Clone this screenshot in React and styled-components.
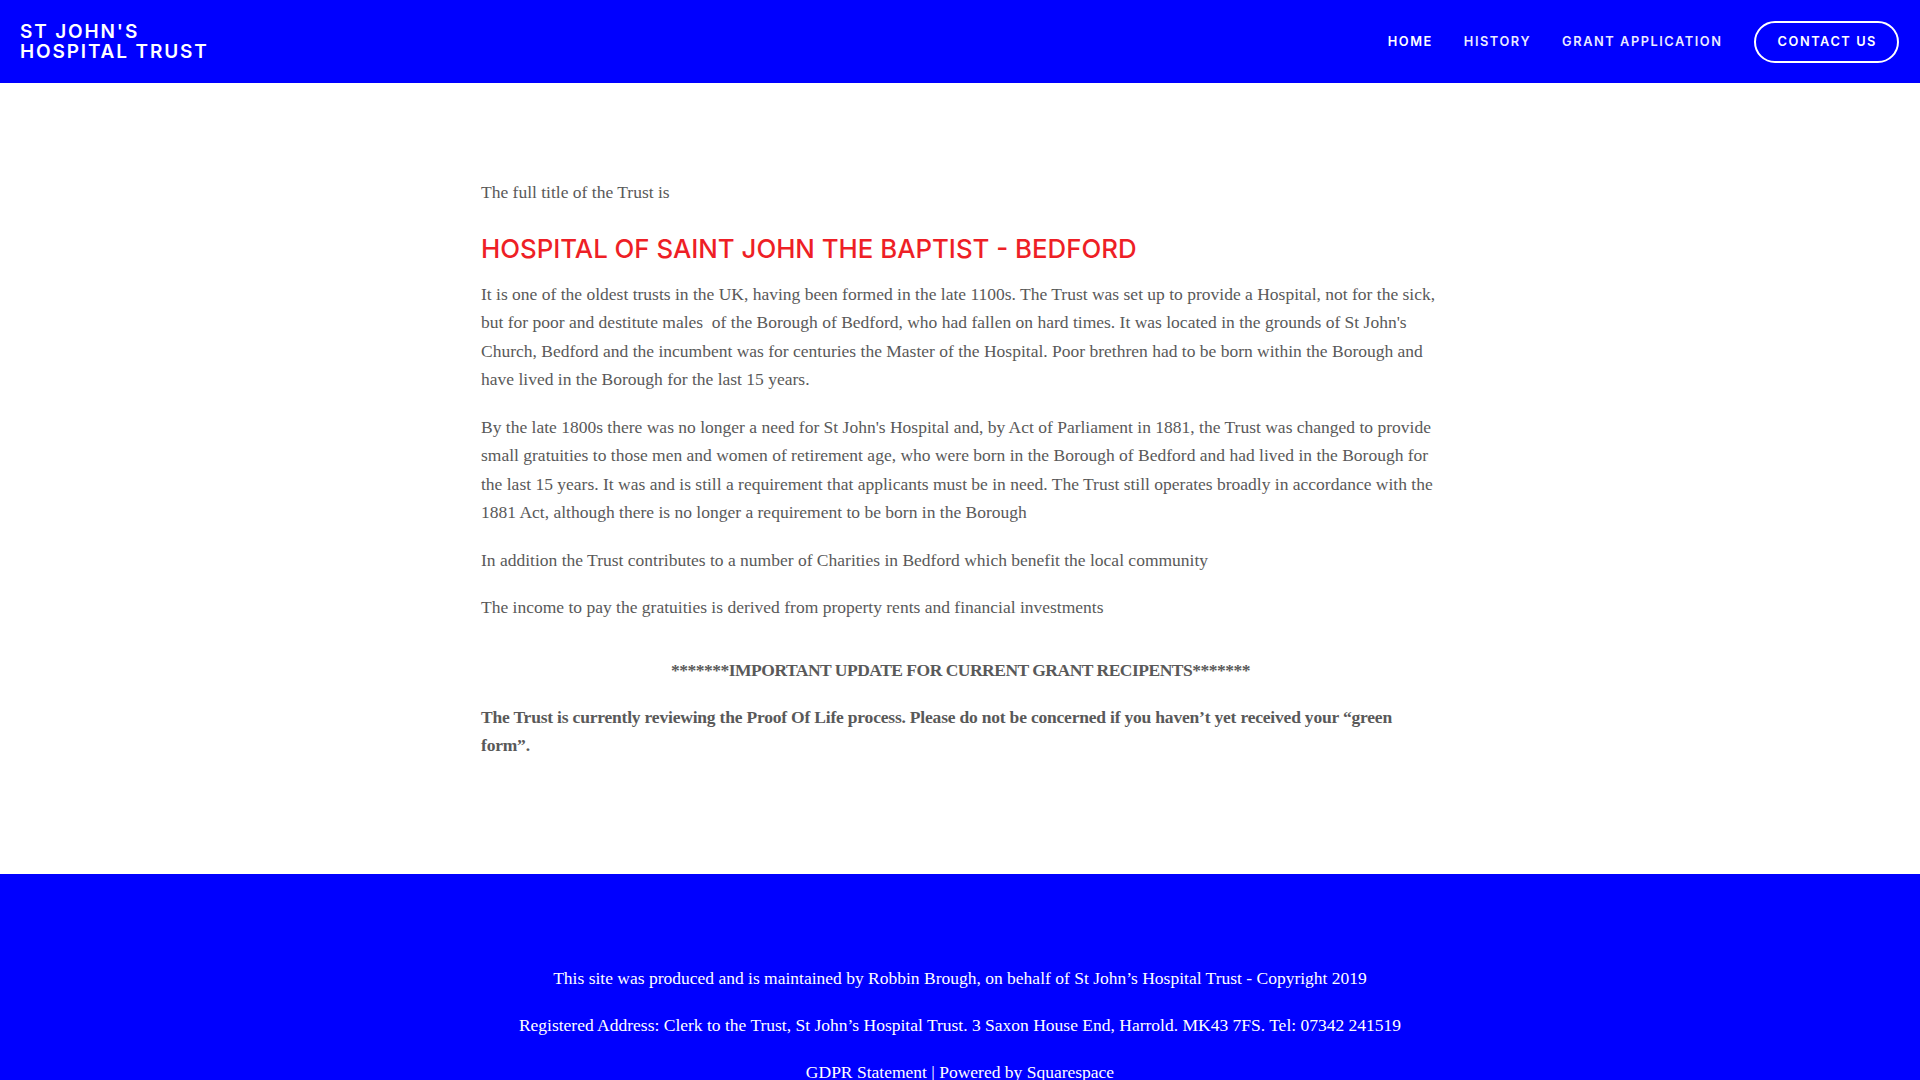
import React from 'react'
import styled, { createGlobalStyle } from 'styled-components'

const GlobalStyle = createGlobalStyle`
    html, body {
        margin: 0;
        padding: 0;
        background: #fff;
    }
    * {
        box-sizing: border-box;
    }
`

const Header = styled.header`
    height: 83px;
    padding: 0 21px 0 20px;
    display: flex;
    justify-content: space-between;
    align-items: center;
    background: #0000ff;
`

const Logo = styled.a`
    display: block;
    color: #fff;
    font-family: Inter, 'Noto Sans', sans-serif;
    font-weight: 600;
    font-size: 19px;
    line-height: 20px;
    letter-spacing: 1.85px;
    text-transform: uppercase;
    text-decoration: none;
`

const Nav = styled.nav`
    display: flex;
    align-items: center;
    gap: 31px;
`

const NavLink = styled.a`
    color: #fff;
    font-family: Inter, 'Noto Sans', sans-serif;
    font-weight: 600;
    font-size: 12.8px;
    letter-spacing: 1.55px;
    text-transform: uppercase;
    text-decoration: none;
    opacity: ${(p) => (p.active ? 1 : 0.92)};
`

const ContactButton = styled.a`
    display: flex;
    align-items: center;
    height: 42px;
    padding: 0 20px 0 22px;
    border: 2px solid #fff;
    border-radius: 21px;
    color: #fff;
    font-family: Inter, 'Noto Sans', sans-serif;
    font-weight: 600;
    font-size: 12.8px;
    letter-spacing: 1.55px;
    text-transform: uppercase;
    text-decoration: none;
`

const Main = styled.main`
    padding: 95px 0 114px;
`

const Content = styled.div`
    width: 960px;
    margin: 0 auto;
    padding-left: 1px;
    color: #595959;
    font-family: 'Liberation Serif', 'Times New Roman', serif;
    font-size: 17.5px;
    line-height: 28.6px;
`

const Para = styled.p`
    margin: 0 0 18.7px;
    font-weight: ${(p) => (p.bold ? 700 : 400)};
    letter-spacing: ${(p) => (p.bold ? '-0.2px' : 'normal')};
    text-align: ${(p) => (p.center ? 'center' : 'left')};
    &:last-child {
        margin-bottom: 0;
    }
`

const Important = styled(Para)`
    margin-top: 34px;
    letter-spacing: -0.5px;
`

const Title = styled.h1`
    margin: 25px 0 14px;
    color: #ee1f26;
    font-family: Inter, 'Noto Sans', sans-serif;
    font-weight: 500;
    font-size: 25.8px;
    line-height: 34px;
    letter-spacing: 0;
`

const Footer = styled.footer`
    padding: 90px 0 40px;
    background: #0000ff;
    color: #fff;
    font-family: 'Liberation Serif', 'Times New Roman', serif;
    font-size: 17.5px;
    line-height: 28.6px;
    text-align: center;
`

const FooterLine = styled.p`
    margin: 0 0 18.4px;
`

const FooterLink = styled.a`
    color: #fff;
    text-decoration: none;
`

const navItems = ['Home', 'History', 'Grant Application']

const App = () => {
    return (
        <>
            <GlobalStyle />
            <Header>
                <Logo href="#">
                    St John's
                    <br />
                    Hospital Trust
                </Logo>
                <Nav>
                    {navItems.map((item, i) => (
                        <NavLink key={i} href="#" active={i === 0 ? 1 : 0}>
                            {item}
                        </NavLink>
                    ))}
                    <ContactButton href="#">Contact Us</ContactButton>
                </Nav>
            </Header>

            <Main>
                <Content>
                    <Para>The full title of the Trust is</Para>
                    <Title>HOSPITAL OF SAINT JOHN THE BAPTIST - BEDFORD</Title>
                    <Para>
                        It is one of the oldest trusts in the UK, having been formed in the late 1100s. The Trust
                        was set up to provide a Hospital, not for the sick, but for poor and destitute males&nbsp; of
                        the Borough of Bedford, who had fallen on hard times. It was located in the grounds of St
                        John's Church, Bedford and the incumbent was for centuries the Master of the Hospital. Poor
                        brethren had to be born within the Borough and have lived in the Borough for the last 15
                        years.
                    </Para>
                    <Para>
                        By the late 1800s there was no longer a need for St John's Hospital and, by Act of
                        Parliament in 1881, the Trust was changed to provide small gratuities to those men and
                        women of retirement age, who were born in the Borough of Bedford and had lived in the
                        Borough for the last 15 years. It was and is still a requirement that applicants must be in
                        need. The Trust still operates broadly in accordance with the 1881 Act, although there is no
                        longer a requirement to be born in the Borough
                    </Para>
                    <Para>
                        In addition the Trust contributes to a number of Charities in Bedford which benefit the
                        local community
                    </Para>
                    <Para>The income to pay the gratuities is derived from property rents and financial investments</Para>
                    <Important bold center>
                        *******IMPORTANT UPDATE FOR CURRENT GRANT RECIPENTS*******
                    </Important>
                    <Para bold>
                        The Trust is currently reviewing the Proof Of Life process. Please do not be concerned if you
                        haven’t yet received your “green form”.
                    </Para>
                </Content>
            </Main>

            <Footer>
                <FooterLine>
                    This site was produced and is maintained by Robbin Brough, on behalf of St John’s Hospital
                    Trust - Copyright 2019
                </FooterLine>
                <FooterLine>
                    Registered Address: Clerk to the Trust, St John’s Hospital Trust. 3 Saxon House End, Harrold.
                    MK43 7FS. Tel: 07342 241519
                </FooterLine>
                <FooterLine>
                    <FooterLink href="#">GDPR Statement</FooterLink> | <FooterLink href="#">Powered by Squarespace</FooterLink>
                </FooterLine>
            </Footer>
        </>
    )
}

export default App
